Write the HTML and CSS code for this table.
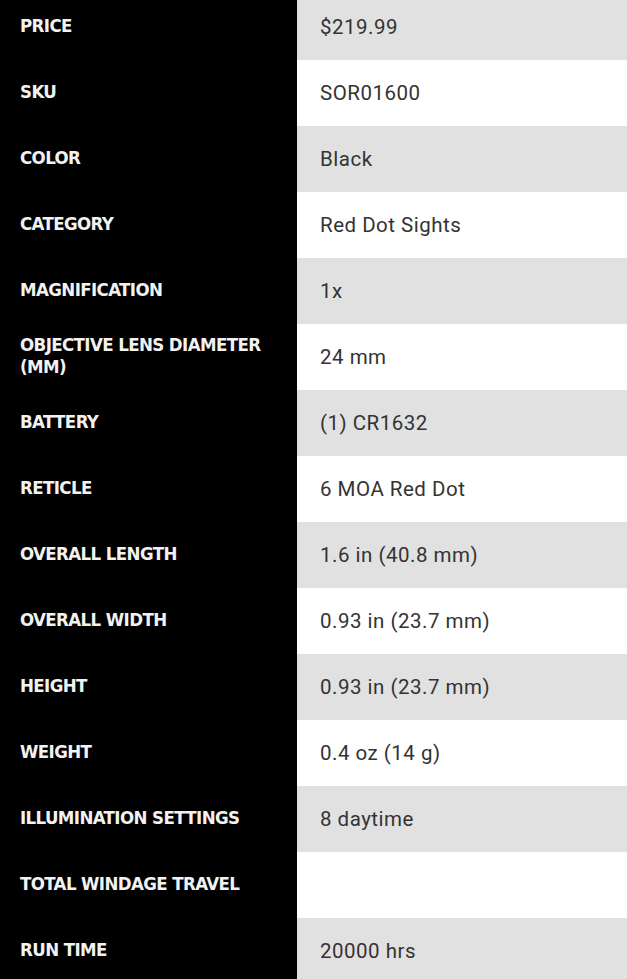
FILE: index.html
```html
<!DOCTYPE html>
<html>
<head>
<meta charset="utf-8">
<link rel="stylesheet" href="styles.css">
</head>
<body>
<div class="specs">
  <div class="row"><div class="label">PRICE</div><div class="value">$219.99</div></div>
  <div class="row"><div class="label">SKU</div><div class="value">SOR01600</div></div>
  <div class="row"><div class="label">COLOR</div><div class="value">Black</div></div>
  <div class="row"><div class="label">CATEGORY</div><div class="value">Red Dot Sights</div></div>
  <div class="row"><div class="label">MAGNIFICATION</div><div class="value">1x</div></div>
  <div class="row"><div class="label">OBJECTIVE LENS DIAMETER (MM)</div><div class="value">24 mm</div></div>
  <div class="row"><div class="label">BATTERY</div><div class="value">(1) CR1632</div></div>
  <div class="row"><div class="label">RETICLE</div><div class="value">6 MOA Red Dot</div></div>
  <div class="row"><div class="label">OVERALL LENGTH</div><div class="value">1.6 in (40.8 mm)</div></div>
  <div class="row"><div class="label">OVERALL WIDTH</div><div class="value">0.93 in (23.7 mm)</div></div>
  <div class="row"><div class="label">HEIGHT</div><div class="value">0.93 in (23.7 mm)</div></div>
  <div class="row"><div class="label">WEIGHT</div><div class="value">0.4 oz (14 g)</div></div>
  <div class="row"><div class="label">ILLUMINATION SETTINGS</div><div class="value">8 daytime</div></div>
  <div class="row"><div class="label">TOTAL WINDAGE TRAVEL</div><div class="value"></div></div>
  <div class="row"><div class="label">RUN TIME</div><div class="value">20000 hrs</div></div>
</div>
</body>
</html>
```

FILE: styles.css
```css
html, body {
  margin: 0;
  padding: 0;
  background: #000;
  overflow: hidden;
}
.specs {
  margin-top: -6px;
  display: flex;
  flex-direction: column;
}
.row {
  display: grid;
  grid-template-columns: 297px 1fr;
  height: 66px;
}
.label {
  background: #000;
  color: #f2f2f2;
  font-family: "DejaVu Sans Condensed", "DejaVu Sans", sans-serif;
  font-weight: bold;
  font-size: 18.5px;
  letter-spacing: -0.6px;
  line-height: 22px;
  padding: 0 20px 2px 20px;
  display: flex;
  align-items: center;
}
.value {
  color: #333;
  font-family: Roboto, "DejaVu Sans", sans-serif;
  font-size: 20.5px;
  letter-spacing: 0.5px;
  padding-left: 23px;
  padding-bottom: 1px;
  display: flex;
  align-items: center;
  background: #fff;
}
.row:nth-child(odd) .value {
  background: #e1e1e1;
}
```
